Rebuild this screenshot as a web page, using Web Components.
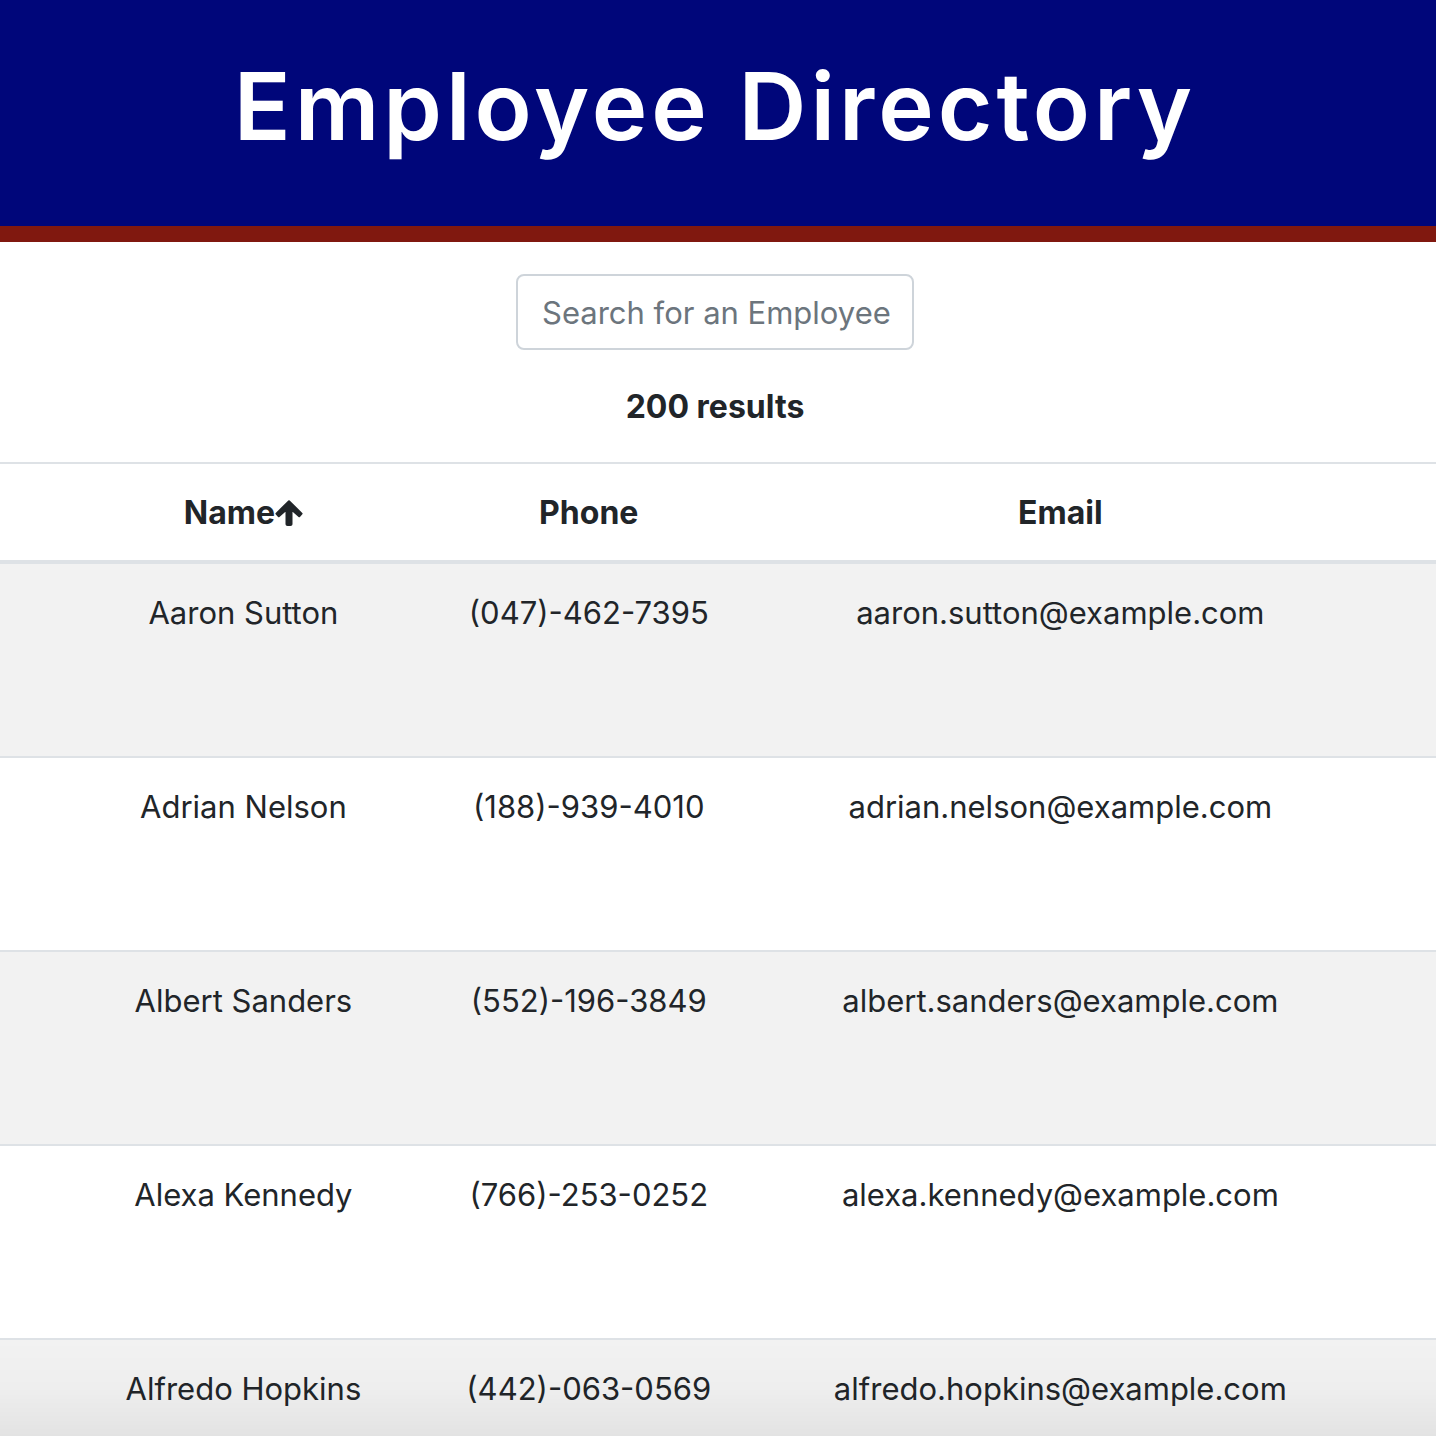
<!DOCTYPE html>
<html lang="en">
<head>
<meta charset="utf-8">
<meta name="viewport" content="width=device-width, initial-scale=1">
<title>Employee Directory</title>
<style>
  body {
    margin: 0;
    background: #fff;
    color: #212529;
    font: 400 32px/50px Inter, "Liberation Sans", sans-serif;
  }
</style>
</head>
<body>
<employee-directory>
  <directory-header slot="header">Employee Directory</directory-header>
  <employee-search slot="search" placeholder="Search for an Employee" count="200"></employee-search>
  <employee-table></employee-table>
</employee-directory>

<script>
const attach = (host, html) => {
  const root = host.attachShadow({ mode: "open" });
  const template = document.createElement("template");
  template.innerHTML = html;
  root.append(template.content.cloneNode(true));
  return root;
};

class EmployeeDirectory extends HTMLElement {
  constructor() {
    super();
    attach(this, `
      <style>
        :host { display: flex; flex-direction: column; height: 100vh; overflow-y: auto; scrollbar-width: none; }
        main { flex: none; }
        .fade {
          position: fixed; inset: auto 0 0 0; height: 96px; pointer-events: none;
          background: linear-gradient(rgba(0,0,0,0), rgba(0,0,0,.015) 50%, rgba(0,0,0,.06));
        }
      </style>
      <slot name="header"></slot>
      <main>
        <slot name="search"></slot>
        <slot></slot>
      </main>
      <div class="fade"></div>`);
  }
}

class DirectoryHeader extends HTMLElement {
  constructor() {
    super();
    attach(this, `
      <style>
        :host { display: block; flex: none; }
        header { padding: 48px 6px 62px 0; background: #00067a; border-bottom: 16px solid #80180f; color: #fff; text-align: center; }
        h1 { margin: 0; font-size: 94px; line-height: 116px; font-weight: 600; letter-spacing: 4px; }
      </style>
      <header><h1><slot></slot></h1></header>`);
  }
}

class EmployeeSearch extends HTMLElement {
  constructor() {
    super();
    const root = attach(this, `
      <style>
        :host { display: block; padding: 32px 6px 30px 0; }
        form { display: flex; flex-direction: column; align-items: center; gap: 32px; }
        input {
          box-sizing: border-box; width: 398px; max-width: 100%; height: 76px; padding: 12px 16px 12px 24px;
          border: 2px solid #ced4da; border-radius: 8px; background: #fff;
          font: inherit; font-size: 31px; color: #495057;
        }
        input::placeholder { color: #6c757d; opacity: 1; }
        output { font-weight: 700; }
      </style>
      <form>
        <input type="text" id="search">
        <output for="search"></output>
      </form>`);
    this.input = root.querySelector("input");
    this.output = root.querySelector("output");
  }
  connectedCallback() {
    const label = this.getAttribute("placeholder");
    this.input.placeholder = label;
    this.input.setAttribute("aria-label", label);
    this.output.textContent = `${this.getAttribute("count")} results`;
  }
}

class SortIcon extends HTMLElement {
  constructor() {
    super();
    attach(this, `
      <style>
        :host { display: inline-flex; }
        svg { width: 28px; height: 26px; fill: currentColor; stroke: currentColor; stroke-width: 2; stroke-linejoin: round; }
      </style>
      <svg viewBox="0 0 28 26" aria-hidden="true"><path d="M14 1.2 L26.6 13.6 L24.2 16.3 L16.5 9.6 V24.2 Q16.5 25 15.5 25 H12.5 Q11.5 25 11.5 24.2 V9.6 L3.8 16.3 L1.4 13.6 Z"/></svg>`);
  }
}

const employees = [
  ["Aaron Sutton", "(047)-462-7395", "aaron.sutton@example.com"],
  ["Adrian Nelson", "(188)-939-4010", "adrian.nelson@example.com"],
  ["Albert Sanders", "(552)-196-3849", "albert.sanders@example.com"],
  ["Alexa Kennedy", "(766)-253-0252", "alexa.kennedy@example.com"],
  ["Alfredo Hopkins", "(442)-063-0569", "alfredo.hopkins@example.com"],
];

class EmployeeTable extends HTMLElement {
  constructor() {
    super();
    const root = attach(this, `
      <style>
        :host { display: block; }
        table { width: 100%; table-layout: fixed; border-collapse: separate; border-spacing: 0; text-align: center; }
        .name { width: 30%; }
        .phone { width: 22%; }
        th, td { padding: 24px 0 22px; border-top: 2px solid #dee2e6; }
        th { border-bottom: 4px solid #dee2e6; font-weight: 700; }
        td { box-sizing: border-box; height: 194px; vertical-align: top; font-size: 31px; }
        th:first-child, td:first-child { padding-left: 56px; }
        th:last-child, td:last-child { padding-right: 62px; }
        tbody tr:first-child td { height: 192px; border-top: 0; }
        tbody tr:nth-child(odd) { background: #f2f2f2; }
        button {
          display: inline-flex; align-items: center; vertical-align: top; padding: 0; border: 0;
          background: none; color: inherit; font: inherit; cursor: pointer;
        }
      </style>
      <table>
        <colgroup><col class="name"><col class="phone"><col></colgroup>
        <thead><tr>
          <th scope="col" aria-sort="ascending"><button type="button">Name<sort-icon></sort-icon></button></th>
          <th scope="col">Phone</th>
          <th scope="col">Email</th>
        </tr></thead>
        <tbody></tbody>
      </table>`);
    const body = root.querySelector("tbody");
    for (const employee of employees) {
      const row = body.insertRow();
      for (const value of employee) row.insertCell().textContent = value;
    }
  }
}

customElements.define("sort-icon", SortIcon);
customElements.define("directory-header", DirectoryHeader);
customElements.define("employee-search", EmployeeSearch);
customElements.define("employee-table", EmployeeTable);
customElements.define("employee-directory", EmployeeDirectory);
</script>
</body>
</html>
